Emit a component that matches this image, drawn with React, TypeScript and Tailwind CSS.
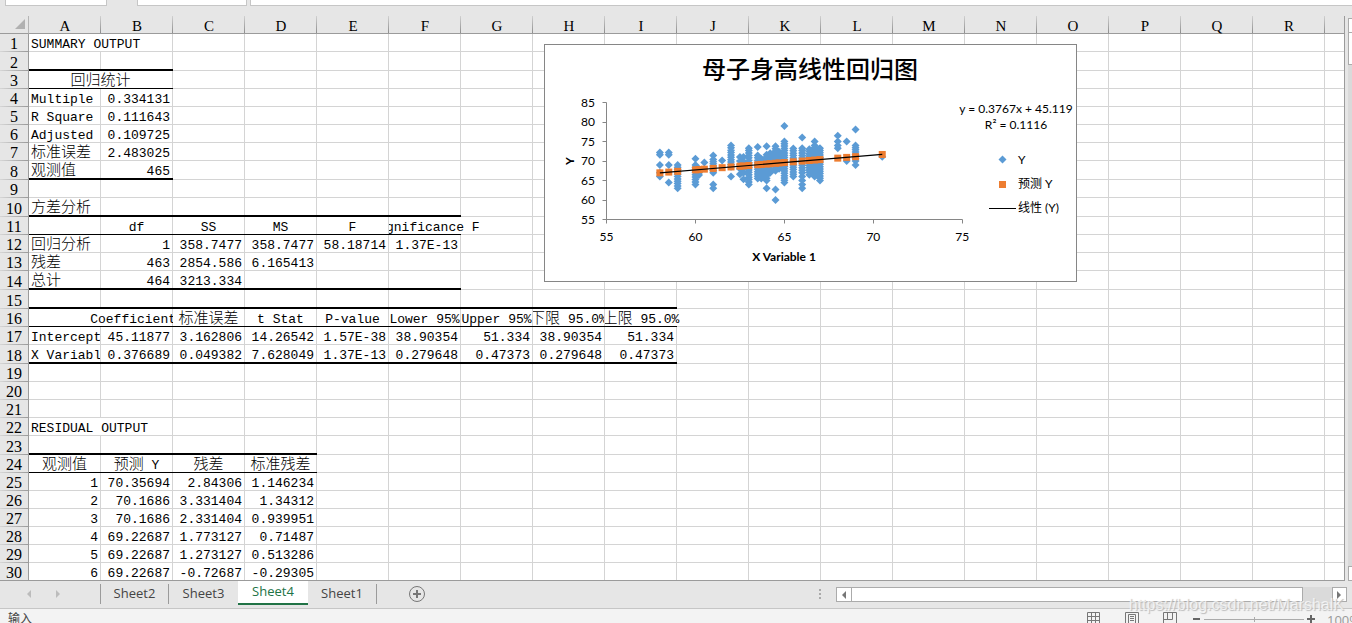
import { clsx } from "clsx";

type Align = "left" | "center" | "right";
type Cell = { text: string; align?: Align; span?: number; clip?: "left" | "right" | "none" };

const COLUMNS = "ABCDEFGHIJKLMNOPQR".split("");
const ROW_COUNT = 30;

const left = (text: string, span?: number): Cell => ({ text, align: "left", span });
const center = (text: string, clip?: Cell["clip"]): Cell => ({ text, align: "center", clip });
const nums = (...values: string[]): Cell[] => values.map((text) => ({ text, align: "right" }));

const SHEET: Record<number, Cell[]> = {
  1: [left("SUMMARY OUTPUT", 2)],
  3: [{ text: "回归统计", align: "center", span: 2 }],
  4: [left("Multiple"), ...nums("0.334131")],
  5: [left("R Square"), ...nums("0.111643")],
  6: [left("Adjusted"), ...nums("0.109725")],
  7: [left("标准误差"), ...nums("2.483025")],
  8: [left("观测值"), ...nums("465")],
  10: [left("方差分析")],
  11: [left(""), center("df"), center("SS"), center("MS"), center("F"), center("Significance F", "left")],
  12: [left("回归分析"), ...nums("1", "358.7477", "358.7477", "58.18714", "1.37E-13")],
  13: [left("残差"), ...nums("463", "2854.586", "6.165413")],
  14: [left("总计"), ...nums("464", "3213.334")],
  16: [
    left(""),
    center("Coefficients", "right"),
    center("标准误差"),
    center("t Stat"),
    center("P-value"),
    center("Lower 95%"),
    center("Upper 95%"),
    center("下限 95.0%"),
    center("上限 95.0%", "left"),
  ],
  17: [left("Intercept"), ...nums("45.11877", "3.162806", "14.26542", "1.57E-38", "38.90354", "51.334", "38.90354", "51.334")],
  18: [left("X Variabl"), ...nums("0.376689", "0.049382", "7.628049", "1.37E-13", "0.279648", "0.47373", "0.279648", "0.47373")],
  22: [left("RESIDUAL OUTPUT", 2)],
  24: [center("观测值"), center("预测 Y"), center("残差"), center("标准残差")],
  25: nums("1", "70.35694", "2.84306", "1.146234"),
  26: nums("2", "70.1686", "3.331404", "1.34312"),
  27: nums("3", "70.1686", "2.331404", "0.939951"),
  28: nums("4", "69.22687", "1.773127", "0.71487"),
  29: nums("5", "69.22687", "1.273127", "0.513286"),
  30: nums("6", "69.22687", "-0.72687", "-0.29305"),
};

// row -> number of columns that carry the ruled line below it
const THICK: Record<number, number> = { 2: 2, 8: 2, 10: 6, 14: 6, 15: 9, 18: 9, 23: 4 };
const THIN: Record<number, number> = { 3: 2, 11: 6, 16: 9, 24: 4 };
// cells whose neighbour's text runs over the gridline
const NO_RIGHT_LINE = ["11-5", "16-0", "16-8"];

// Chinese runs are set larger than the latin ones
function CellText({ text }: { text: string }) {
  return (
    <>
      {text.split(/([\u4e00-\u9fff]+)/).map((part, i) =>
        i % 2 ? (
          <span key={i} className="text-[15px] font-light">{part}</span>
        ) : (
          part
        )
      )}
    </>
  );
}

function GridCell({ cell, row, col }: { cell?: Cell; row: number; col: number }) {
  const thick = col < (THICK[row] ?? 0);
  const thin = col < (THIN[row] ?? 0);
  const rightLine = col < COLUMNS.length && !NO_RIGHT_LINE.includes(`${row}-${col}`);
  return (
    <td
      colSpan={cell?.span}
      className={clsx(
        "p-0 align-bottom",
        rightLine && "bg-linear-to-r from-[#d4d4d4] to-[#d4d4d4] bg-[size:1px_100%] bg-right bg-no-repeat",
        thick ? "border-b-2 border-b-black" : thin ? "border-b border-b-black" : "border-b border-b-[#d4d4d4]"
      )}
    >
      {cell?.text && (
        <div
          className={clsx(
            "flex h-4 px-0.5 leading-5 whitespace-pre",
            cell.align === "right" && "justify-end",
            cell.align === "center" && "justify-center",
            !cell.clip && "mr-px overflow-x-clip",
            cell.clip === "left" && "[clip-path:inset(-4px_-40px_-4px_0)]",
            cell.clip === "right" && "[clip-path:inset(-4px_0_-4px_-40px)]"
          )}
        >
          <span className="shrink-0">
            <CellText text={cell.text} />
          </span>
        </div>
      )}
    </td>
  );
}

function Sheet() {
  const rows = Array.from({ length: ROW_COUNT }, (_, i) => i + 1);
  return (
    <table className="w-full table-fixed border-separate border-spacing-0 bg-white text-[13px] leading-4 text-black">
      <colgroup>
        <col className="w-[29px]" />
        {COLUMNS.map((c) => (
          <col key={c} className="w-[72px]" />
        ))}
        <col />
      </colgroup>
      <thead>
        <tr className="h-[18px] bg-[#e6e6e6]">
          <th className="border-b border-r border-[#9b9b9b] border-r-[#b5b5b5] p-0">
            <svg className="ml-[15px]" width="11" height="11" viewBox="0 0 11 11">
              <path d="M10 0V10H0Z" fill="#b1b1b1" />
            </svg>
          </th>
          {COLUMNS.map((c) => (
            <th
              key={c}
              scope="col"
              className="border-b border-[#9b9b9b] bg-linear-to-b from-[#d0d0d0] to-[#8e8e8e] bg-[size:1px_100%] bg-right bg-no-repeat p-0 align-bottom font-['Liberation_Serif',serif] text-[15px] font-normal"
            >
              <div className="h-4 leading-[18px]">{c}</div>
            </th>
          ))}
          <th className="border-b border-[#9b9b9b] p-0" />
        </tr>
      </thead>
      <tbody>
        {rows.map((row) => {
          const cells = SHEET[row] ?? [];
          const span = cells[0]?.span ?? 1;
          // a spanning first cell takes the place of the columns after it
          const columns = Array.from({ length: COLUMNS.length + 1 }, (_, i) => i).filter((i) => i === 0 || i >= span);
          return (
            <tr key={row} className={row in THICK ? "h-[19px]" : "h-[18px]"}>
              <th
                scope="row"
                className="border-r border-[#9b9b9b] bg-[#e6e6e6] bg-linear-to-r from-[#d6d6d6] to-[#9b9b9b] bg-[size:100%_1px] bg-bottom bg-no-repeat p-0 align-bottom font-['Liberation_Serif',serif] text-[16px] font-normal"
              >
                <div className="h-[17px] leading-[18px]">{row}</div>
              </th>
              {columns.map((col) => (
                <GridCell key={col} row={row} col={col} cell={cells[col]} />
              ))}
            </tr>
          );
        })}
      </tbody>
    </table>
  );
}

// x -> single values or [from, to] runs of observed heights
const POINTS: [number, (number | [number, number])[]][] = [
  [58, [72.2, 71.6, 69, 67, 66]],
  [58.5, [72.2, 71.6, 69, 64.5]],
  [59, [[63, 69]]],
  [60, [70.6, [64, 69]]],
  [60.2, [68, 67, 66.4]],
  [60.5, [69.6]],
  [61, [71.4, [67, 70.4], 64, 63]],
  [61.5, [70.1]],
  [62, [[68.5, 74], 66]],
  [62.5, [71, 70, 69, 68, 66.6]],
  [62.7, [71, 70, 68, 67, 65.3]],
  [63, [[64, 73.3]]],
  [63.5, [73.6, [65.5, 71.4]]],
  [63.7, [[65.5, 70.6]]],
  [64, [73.8, [65, 71.6], 63]],
  [64.2, [72, 71.3, 70, 68, 67]],
  [64.5, [[67.5, 73.8], 62.7, 60]],
  [64.7, [[68, 72.4]]],
  [65, [79, [64.5, 75]]],
  [65.5, [[66, 73.2]]],
  [66, [76, [67, 73.3], 66, 65, 64, 63]],
  [66.4, [[66.5, 73]]],
  [66.7, [75, [66, 74]]],
  [67, [[65, 73.3]]],
  [68, [76.5, 75, 74, 73.3]],
  [68.5, [75, 70]],
  [69, [78.1, [70, 74], 69]],
  [70.5, [71.1]],
];

const px = (x: number) => 62.5 + (x - 55) * 17.79;
const py = (y: number) => 175.5 - (y - 55) * 3.9;
const fit = (x: number) => 0.3767 * x + 45.119;

function expand(v: number | [number, number]) {
  if (typeof v === "number") return [v];
  const n = Math.round((v[1] - v[0]) / 0.6);
  return Array.from({ length: n + 1 }, (_, i) => v[0] + ((v[1] - v[0]) * i) / n);
}

const diamond = (x: number, y: number) => `M${x} ${y - 4}L${x + 4} ${y}L${x} ${y + 4}L${x - 4} ${y}Z`;

function RegressionChart() {
  return (
    <svg
      role="img"
      aria-label="母子身高线性回归图"
      width="533"
      height="238"
      viewBox="0 0 533 238"
      className="absolute left-[544px] top-7 bg-white font-[Lato,'Noto_Sans_CJK_SC',sans-serif] text-[12px]"
    >
      <rect x="0.5" y="0.5" width="532" height="237" fill="none" stroke="#868686" />
      <text x="266" y="34" textAnchor="middle" className="font-['Liberation_Serif','Noto_Sans_CJK_SC',serif] text-[24px] font-medium">母子身高线性回归图</text>

      <g stroke="#868686" fill="none">
        <path d="M62.5 58.5V179.5M58.5 175.5H418.5V179.5" />
        {[60, 65, 70, 75, 80, 85].map((y) => (
          <path key={y} d={`M58.5 ${Math.floor(py(y)) + 0.5}h4`} />
        ))}
        {[60, 65, 70].map((x) => (
          <path key={x} d={`M${Math.floor(px(x)) + 0.5} 175.5v4`} />
        ))}
      </g>
      {[55, 60, 65, 70, 75, 80, 85].map((y) => (
        <text key={y} x="51" y={py(y) + 4} textAnchor="end">{y}</text>
      ))}
      {[55, 60, 65, 70, 75].map((x) => (
        <text key={x} x={px(x)} y="197" textAnchor="middle">{x}</text>
      ))}
      <text x="240" y="217" textAnchor="middle" className="font-bold">X Variable 1</text>
      <text transform="translate(30 117) rotate(-90)" textAnchor="middle" className="font-bold">Y</text>

      <path
        fill="#5b9bd5"
        d={POINTS.map(([x, ys]) => ys.flatMap(expand).map((y) => diamond(px(x), py(y))).join("")).join("")}
      />
      {POINTS.map(([x]) => (
        <rect key={x} x={px(x) - 3.5} y={py(fit(x)) - 3.5} width="7" height="7" fill="#ed7d31" />
      ))}
      <path d={`M${px(58)} ${py(fit(58))}L${px(70.5)} ${py(fit(70.5))}`} stroke="#000" strokeWidth="1.2" />

      <text x="472" y="69" textAnchor="middle">y = 0.3767x + 45.119</text>
      <text x="472" y="85" textAnchor="middle">R² = 0.1116</text>

      <path d={diamond(458.5, 115.5)} fill="#5b9bd5" />
      <rect x="455" y="137" width="7" height="7" fill="#ed7d31" />
      <path d="M445 164.5H472" stroke="#000" />
      <text x="474" y="120">Y</text>
      <text x="474" y="144">预测 Y</text>
      <text x="474" y="168">线性 (Y)</text>
    </svg>
  );
}

const SHEETS = ["Sheet2", "Sheet3", "Sheet4", "Sheet1"];

function SheetTabs() {
  return (
    <div className="flex h-7 shrink-0 border-b border-[#c6c6c6] pr-[5px]">
      <div className="flex w-[100px] items-center gap-6 pb-0.5 pl-[27px]">
        <button aria-label="上一个工作表">
          <svg width="5" height="8" viewBox="0 0 5 8"><path d="M4 0V8L0 4Z" fill="#bcbcbc" /></svg>
        </button>
        <button aria-label="下一个工作表">
          <svg width="5" height="8" viewBox="0 0 5 8"><path d="M0 0V8L4 4Z" fill="#bcbcbc" /></svg>
        </button>
      </div>
      <div className="flex font-['Open_Sans','Noto_Sans',sans-serif] text-[13px] text-[#444]">
        {SHEETS.map((name) =>
          name === "Sheet4" ? (
            <button key={name} className="-mt-px h-[25px] w-[70px] border-b-2 border-[#217346] bg-white font-medium text-[#217346]">
              {name}
            </button>
          ) : (
            <button
              key={name}
              className={clsx("mt-[3px] h-5 w-[69px] border-[#9b9b9b] pb-1", name === "Sheet2" && "border-x", name === "Sheet1" && "border-r")}
            >
              {name}
            </button>
          )
        )}
      </div>
      <button aria-label="新工作表" className="ml-8 self-center">
        <svg width="17" height="17" viewBox="0 0 17 17" fill="none" stroke="#777">
          <circle cx="8" cy="8" r="7.5" />
          <path d="M4 8h8M8 4v8" strokeWidth="2" />
        </svg>
      </button>
      <div className="ml-auto flex items-start pt-1.5">
        <svg className="mr-[14px] mt-0.5" width="3" height="11" viewBox="0 0 3 11" fill="#aaa">
          <path d="M0 0h2v2H0zM0 4h2v2H0zM0 8h2v2H0z" />
        </svg>
        <button aria-label="向左滚动" className="flex h-[15px] w-4 items-center justify-center border border-[#ababab] bg-white">
          <svg width="5" height="8" viewBox="0 0 5 8"><path d="M4 0V8L0 4Z" fill="#777" /></svg>
        </button>
        <div className="flex w-[480px] bg-[#dadada]">
          <div className="h-[15px] w-[451px] border border-l-0 border-[#ababab] bg-white" />
        </div>
        <button aria-label="向右滚动" className="flex h-[15px] w-[15px] items-center justify-center border border-[#ababab] bg-white">
          <svg width="5" height="8" viewBox="0 0 5 8"><path d="M0 0V8L4 4Z" fill="#777" /></svg>
        </button>
      </div>
    </div>
  );
}

function StatusBar() {
  return (
    <div className="flex h-[22px] shrink-0 items-start bg-[#f3f3f3] pl-2 font-['Open_Sans','Noto_Sans_CJK_SC',sans-serif] text-[12px] text-[#444]">
      <span className="pt-px">输入</span>
      <div className="ml-auto flex items-start pt-[3px]">
        <button aria-label="普通" className="mr-[25px]">
          <svg width="13" height="13" viewBox="0 0 13 13" fill="none" stroke="#777">
            <path d="M.5.5h12v12H.5zM4.5.5v12M8.5.5v12M.5 4.5h12M.5 8.5h12" />
          </svg>
        </button>
        <button aria-label="页面布局" className="mr-6">
          <svg width="14" height="13" viewBox="0 0 14 13" fill="none" stroke="#777">
            <path d="M.5.5h13v12H.5zM3.5 2.5h7v10h-7zM5 4.5h4M5 6.5h4M5 8.5h4" />
          </svg>
        </button>
        <button aria-label="分页预览" className="mr-4">
          <svg width="14" height="13" viewBox="0 0 14 13" fill="none" stroke="#777">
            <path d="M.5.5h13v12H.5zM4.5.5v7M9.5.5v7M.5 7.5h9" />
          </svg>
        </button>
        <button aria-label="缩小" className="mr-1">
          <svg width="7" height="13" viewBox="0 0 7 13"><path d="M0 6h7v2H0z" fill="#666" /></svg>
        </button>
        <input
          type="range"
          aria-label="显示比例"
          defaultValue={50}
          className="mt-[7px] h-px w-[100px] appearance-none bg-[#ababab] [&::-webkit-slider-thumb]:h-[5px] [&::-webkit-slider-thumb]:w-px [&::-webkit-slider-thumb]:appearance-none [&::-webkit-slider-thumb]:bg-[#ababab]"
        />
        <button aria-label="放大" className="ml-[3px] mr-3">
          <svg width="8" height="13" viewBox="0 0 8 13"><path d="M0 6h3V3h2v3h3v2H5v3H3V8H0z" fill="#666" /></svg>
        </button>
        <span className="w-[25px] overflow-hidden text-[13px] leading-4 text-[#999]">100%</span>
      </div>
    </div>
  );
}

export default function App() {
  return (
    <div className="relative flex h-screen flex-col overflow-hidden bg-[#e6e6e6] font-['Liberation_Mono','Noto_Sans_CJK_SC',monospace]">
      {/* Name box, function buttons, formula box */}
      <div className="flex h-1.5 shrink-0 pl-[5px]">
        <input aria-label="名称框" className="w-[102px] border border-t-0 border-[#c6c6c6] bg-white" />
        <div className="ml-[30px] w-[110px] border border-t-0 border-[#c6c6c6] bg-white" />
        <input aria-label="编辑栏" className="ml-[3px] min-w-0 flex-1 border border-r-0 border-t-0 border-[#c6c6c6] bg-white" />
      </div>

      <div className="flex shrink-0 pt-2.5">
        <div className="relative min-w-0 flex-1 overflow-hidden border-b border-[#9b9b9b]">
          <div className="-mb-px border-r border-[#9b9b9b]">
            <Sheet />
          </div>
          <RegressionChart />
        </div>
        {/* Vertical scrollbar */}
        <div className="ml-[3px] mt-0.5 flex w-1 flex-col bg-[#dadada]">
          <div className="h-[15px] border border-r-0 border-[#ababab] bg-white" />
          <div className="h-8 border border-r-0 border-t-0 border-[#ababab] bg-white" />
          <div className="mt-auto h-[15px] border border-r-0 border-[#ababab] bg-white" />
        </div>
      </div>

      <SheetTabs />
      <StatusBar />

      {/* Watermark */}
      <div className="pointer-events-none absolute bottom-1.5 right-2 font-['Liberation_Sans',sans-serif] text-[16px] leading-6 text-white/70 [text-shadow:1px_1px_1px_#bbb]">
        https://blog.csdn.net/MarshalK
      </div>
    </div>
  );
}
